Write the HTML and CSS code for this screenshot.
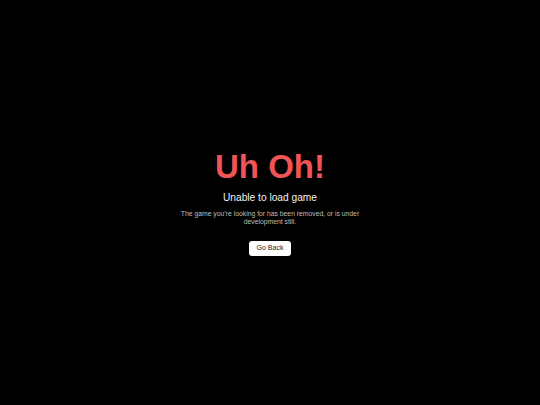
FILE: index.html
```html
<!DOCTYPE html>
<html lang="en">
<head>
<meta charset="utf-8">
<title>Uh Oh!</title>
<link rel="stylesheet" href="styles.css">
</head>
<body>
<main class="page">
  <div class="error">
    <h1 class="error-title">Uh Oh!</h1>
    <h2 class="error-subtitle">Unable to load game</h2>
    <p class="error-text">The game you’re looking for has been removed, or is under development still.</p>
    <button class="error-button" type="button">Go Back</button>
  </div>
</main>
</body>
</html>
```

FILE: styles.css
```css
html, body {
  margin: 0;
  padding: 0;
  height: 100%;
  background: #000;
}

body {
  font-family: "Liberation Sans", Arial, sans-serif;
}

.page {
  height: 100%;
  display: flex;
  align-items: center;
  justify-content: center;
}

.error {
  display: flex;
  flex-direction: column;
  align-items: center;
  text-align: center;
  padding-top: 1px;
}

.error-title {
  margin: 0;
  font-size: 33px;
  line-height: 1;
  font-weight: 700;
  color: #f05454;
}

.error-subtitle {
  margin: 9.3px 0 0;
  font-size: 10.2px;
  line-height: 1;
  font-weight: 400;
  color: #f2f2f2;
}

.error-text {
  margin: 7.4px 0 0;
  max-width: 200px;
  font-size: 6.8px;
  line-height: 8px;
  color: #bdbdbd;
}

.error-button {
  margin-top: 14.7px;
  padding: 3.5px 8px;
  border: none;
  border-radius: 3px;
  background: #fff;
  color: #222;
  font-family: "Liberation Sans", Arial, sans-serif;
  font-size: 7px;
  line-height: 8px;
  cursor: pointer;
}
```
